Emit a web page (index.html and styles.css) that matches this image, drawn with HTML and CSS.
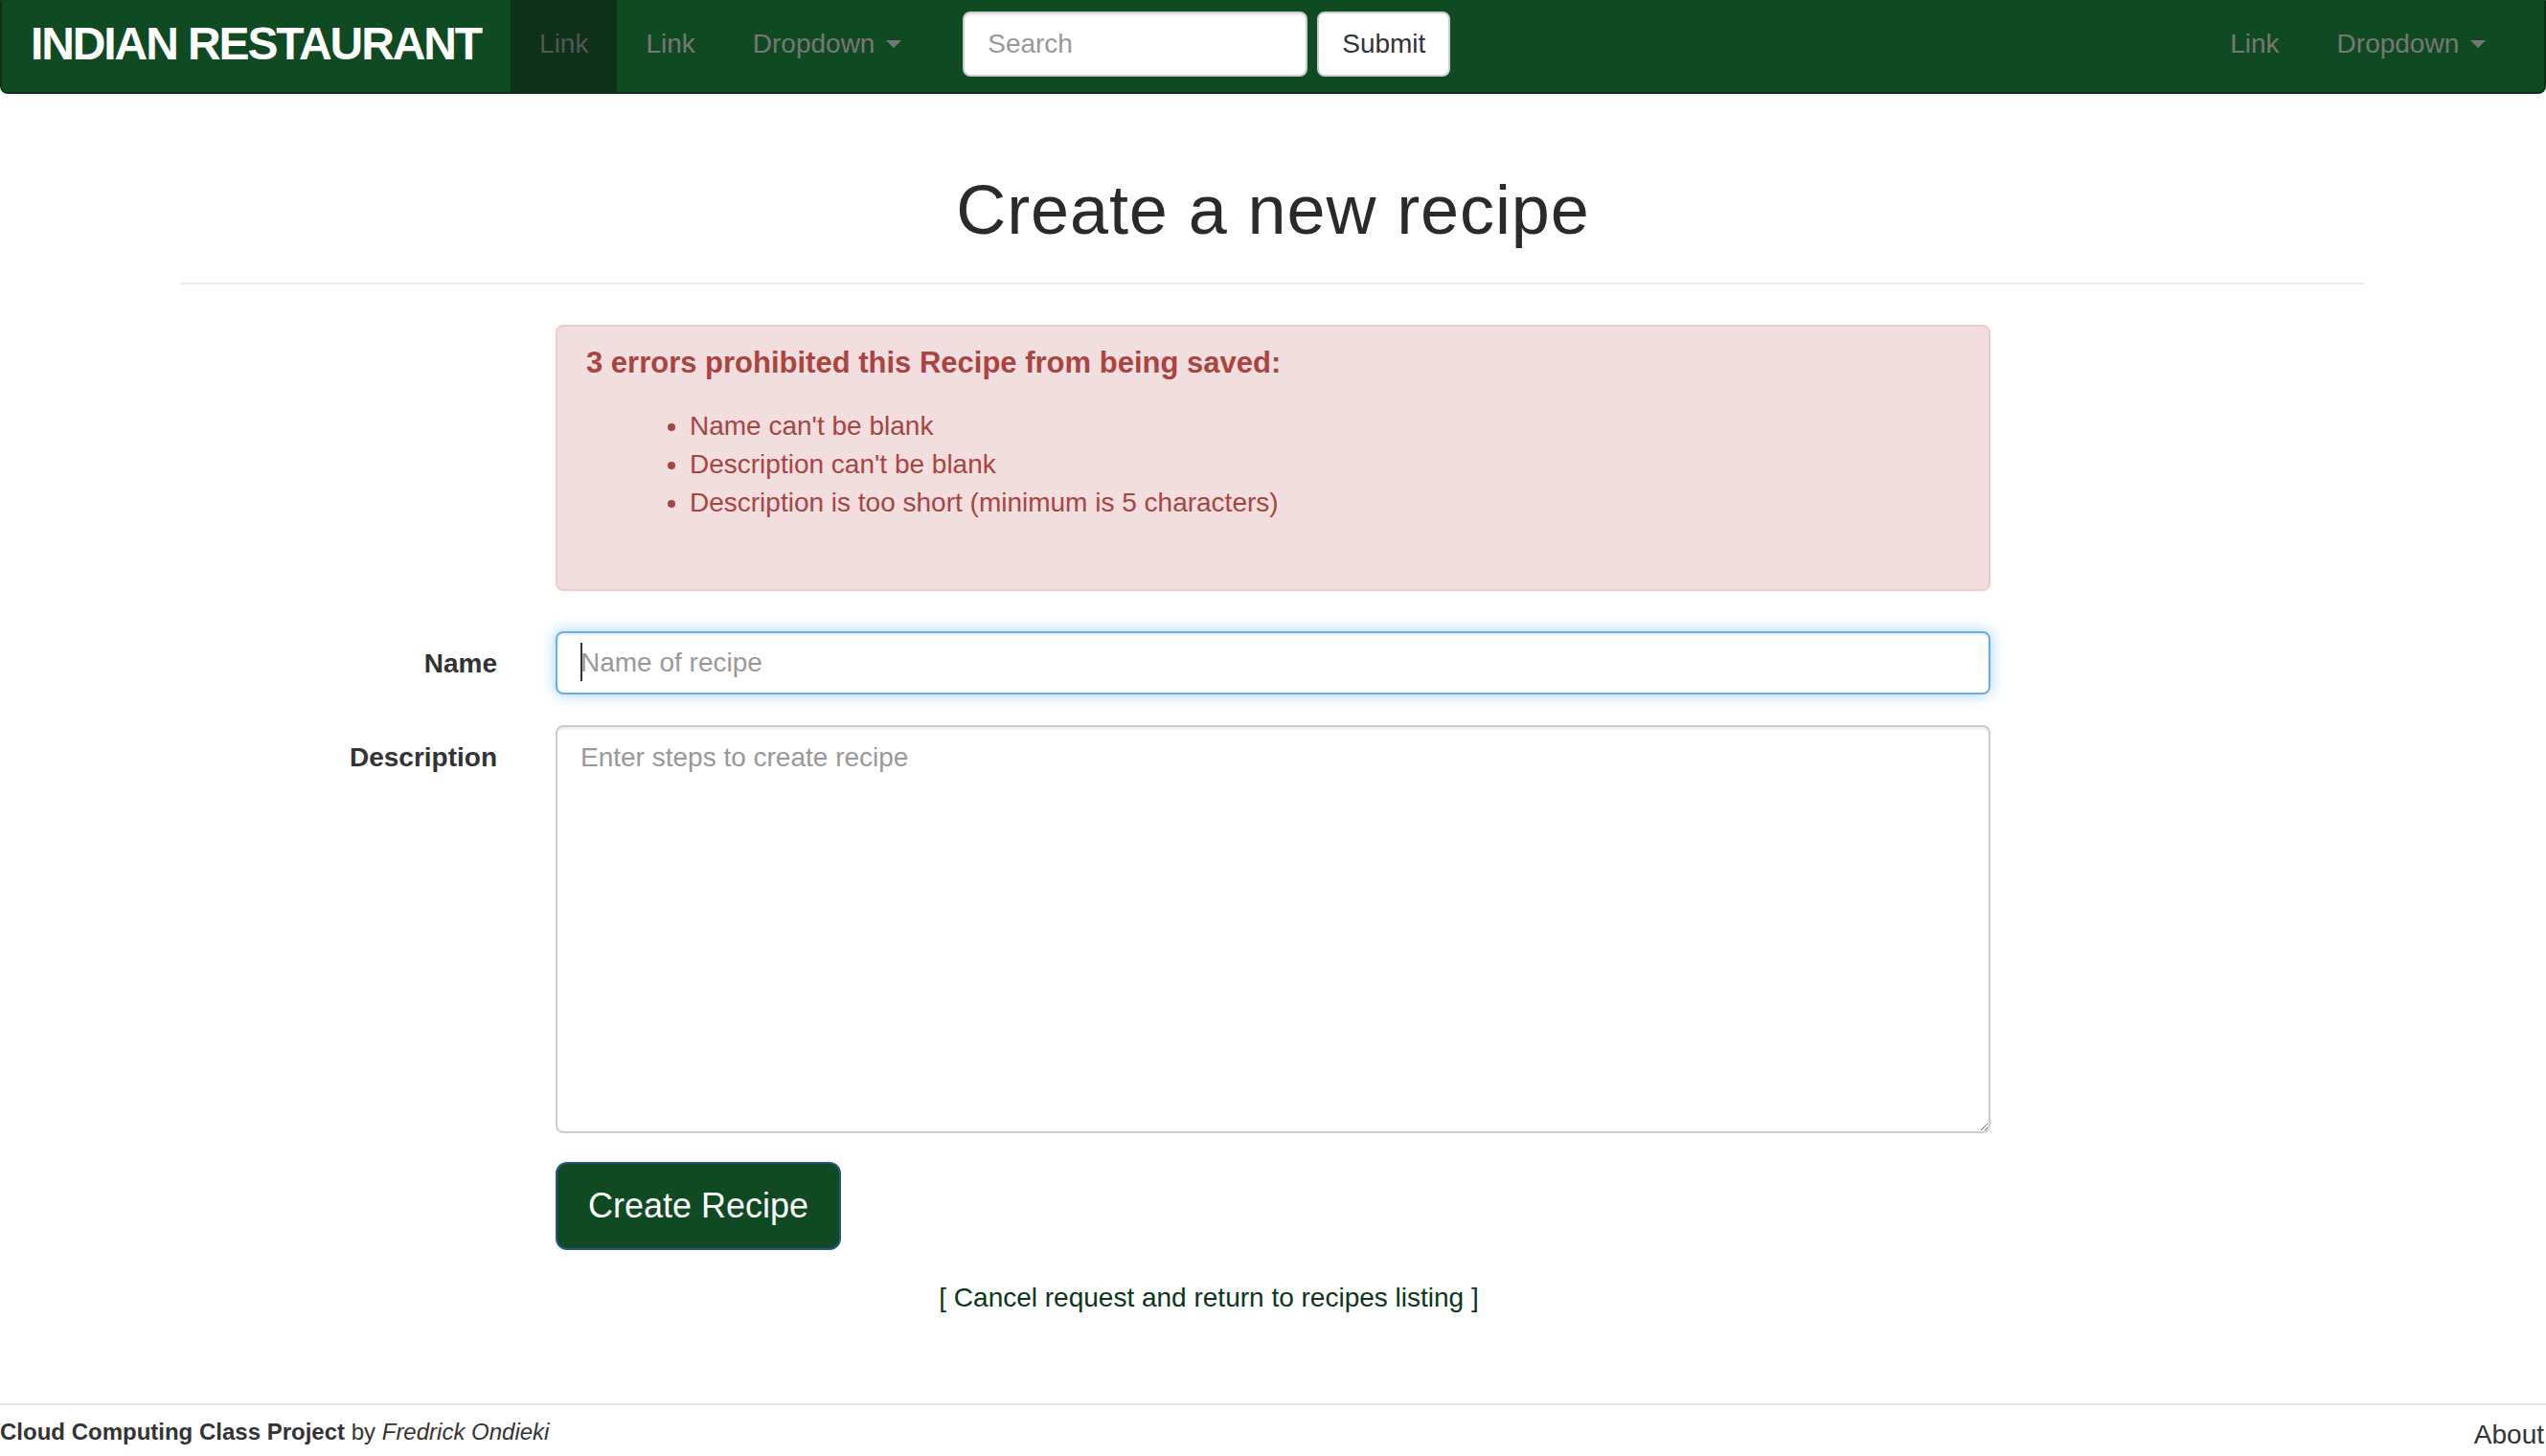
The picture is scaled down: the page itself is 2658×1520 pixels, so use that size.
FILE: index.html
```html
<!DOCTYPE html>
<html lang="en">
<head>
<meta charset="utf-8">
<title>Create a new recipe</title>
<link rel="stylesheet" href="styles.css">
</head>
<body>
<nav class="navbar">
  <a class="brand" href="#">INDIAN RESTAURANT</a>
  <ul class="nav">
    <li class="active"><a href="#">Link</a></li>
    <li><a href="#">Link</a></li>
    <li><a href="#">Dropdown <span class="caret"></span></a></li>
  </ul>
  <form class="nav-form">
    <input class="nav-search" type="text" placeholder="Search">
    <button class="btn-submit" type="button">Submit</button>
  </form>
  <ul class="nav nav-right">
    <li><a href="#">Link</a></li>
    <li><a href="#">Dropdown <span class="caret"></span></a></li>
  </ul>
</nav>

<main class="container">
  <div class="page-header">
    <h1>Create a new recipe</h1>
  </div>

  <form class="recipe-form">
    <div class="alert">
      <h2>3 errors prohibited this Recipe from being saved:</h2>
      <ul>
        <li>Name can't be blank</li>
        <li>Description can't be blank</li>
        <li>Description is too short (minimum is 5 characters)</li>
      </ul>
    </div>

    <div class="form-row row-name">
      <label class="control-label" for="recipe_name">Name</label>
      <div class="field">
        <input class="form-control focused" id="recipe_name" type="text" placeholder="Name of recipe">
        <span class="text-caret"></span>
      </div>
    </div>

    <div class="form-row row-desc">
      <label class="control-label" for="recipe_description">Description</label>
      <div class="field">
        <textarea class="form-control textarea" id="recipe_description" placeholder="Enter steps to create recipe"></textarea>
      </div>
    </div>

    <div class="form-row row-submit">
      <span class="control-label"></span>
      <div class="field">
        <button class="btn-create" type="button">Create Recipe</button>
      </div>
    </div>
  </form>

  <p class="cancel"><a href="#">[ Cancel request and return to recipes listing ]</a></p>
</main>

<footer class="footer">
  <p class="credit"><strong>Cloud Computing Class Project</strong> by <em>Fredrick Ondieki</em></p>
  <a class="about" href="#">About</a>
</footer>
</body>
</html>
```

FILE: styles.css
```css
* {
  box-sizing: border-box;
}

html, body {
  margin: 0;
  padding: 0;
  background: #fff;
}

body {
  font-family: "Liberation Sans", Arial, Helvetica, sans-serif;
  font-size: 28px;
  line-height: 40px;
  color: #333;
}

a {
  text-decoration: none;
}

/* ---------- Navbar ---------- */
.navbar {
  margin-top: -6px;
  height: 104px;
  display: flex;
  align-items: center;
  background: #104a22;
  border: 2px solid #0c2f16;
  border-radius: 8px;
  padding-right: 31px;
}

.brand {
  display: flex;
  align-items: center;
  height: 100px;
  padding: 0 31px 0 30px;
  font-size: 48px;
  font-weight: bold;
  letter-spacing: -2.1px;
  color: #fff;
  white-space: nowrap;
}

.nav {
  display: flex;
  list-style: none;
  margin: 0;
  padding: 0;
  height: 100px;
}

.nav li {
  display: flex;
}

.nav a {
  display: flex;
  align-items: center;
  padding: 0 30px;
  color: #777;
  white-space: pre;
}

.nav li.active a {
  background: #0d3219;
  color: #555;
}

.caret {
  display: inline-block;
  width: 0;
  height: 0;
  margin-left: 4px;
  border-top: 8px solid #777;
  border-left: 8px solid transparent;
  border-right: 8px solid transparent;
}

.nav-right {
  margin-left: auto;
}

.nav-form {
  display: flex;
  align-items: center;
  gap: 10px;
  padding: 0 30px 0 34px;
  margin: 0;
}

.nav-search {
  width: 360px;
  height: 68px;
  padding: 12px 24px;
  font-family: inherit;
  font-size: 28px;
  color: #555;
  background: #fff;
  border: 2px solid #ccc;
  border-radius: 8px;
  box-shadow: inset 0 2px 2px rgba(0, 0, 0, .075);
  outline: none;
}

.nav-search::placeholder,
.form-control::placeholder {
  color: #999;
  opacity: 1;
}

.btn-submit {
  height: 68px;
  padding: 12px 24px;
  font-family: inherit;
  font-size: 28px;
  line-height: 40px;
  color: #333;
  background: #fff;
  border: 2px solid #ccc;
  border-radius: 8px;
}

/* ---------- Content ---------- */
.container {
  width: 2280px;
  margin: 0 auto;
}

.page-header {
  margin-top: 81px;
  padding-bottom: 36px;
  margin-bottom: 42px;
  border-bottom: 2px solid #eee;
  text-align: center;
}

.page-header h1 {
  margin: 0;
  font-size: 72px;
  line-height: 80px;
  font-weight: normal;
  letter-spacing: 0.9px;
  color: #2a2a2a;
}

.alert {
  margin-left: 391px;
  width: 1498px;
  margin-bottom: 42px;
  padding: 20px 30px 30px;
  background: #f2dede;
  border: 2px solid #ebccd1;
  border-radius: 8px;
  color: #a94442;
}

.alert h2 {
  margin: 0 0 28px;
  font-size: 31px;
  line-height: 36px;
  font-weight: bold;
}

.alert ul {
  margin: 0 0 40px;
  padding-left: 108px;
}

.form-row {
  display: flex;
  gap: 61px;
}

.row-name {
  margin-bottom: 32px;
}

.row-desc {
  margin-bottom: 30px;
}

.control-label {
  flex: 0 0 330px;
  padding-top: 14px;
  text-align: right;
  font-weight: bold;
  color: #333;
}

.field {
  position: relative;
  width: 1498px;
}

.form-control {
  display: block;
  width: 100%;
  padding: 12px 24px;
  font-family: inherit;
  font-size: 28px;
  line-height: 40px;
  color: #555;
  background: #fff;
  border: 2px solid #ccc;
  border-radius: 8px;
  box-shadow: inset 0 2px 2px rgba(0, 0, 0, .075);
  outline: none;
}

.focused {
  height: 66px;
  border-color: #66afe9;
  box-shadow: inset 0 2px 2px rgba(0, 0, 0, .075), 0 0 16px rgba(102, 175, 233, .6);
}

.text-caret {
  position: absolute;
  left: 26px;
  top: 12px;
  width: 2px;
  height: 40px;
  background: #333;
}

.textarea {
  height: 426px;
  resize: vertical;
}

.btn-create {
  height: 92px;
  padding: 20px 32px;
  font-family: inherit;
  font-size: 36px;
  line-height: 48px;
  color: #fff;
  background: #104a22;
  border: 2px solid #2a5580;
  border-radius: 12px;
}

.cancel {
  margin: 30px 0 0 391px;
  width: 1364px;
  text-align: center;
}

.cancel a {
  color: #0c3519;
}

/* ---------- Footer ---------- */
.footer {
  margin-top: 90px;
  border-top: 2px solid #e5e5e5;
  padding-top: 11px;
  display: flex;
  justify-content: space-between;
  align-items: flex-start;
}

.credit {
  margin: 0;
  font-size: 24px;
  line-height: 34px;
  color: #333;
}

.about {
  color: #333;
  line-height: 40px;
  padding-right: 2px;
}
```
